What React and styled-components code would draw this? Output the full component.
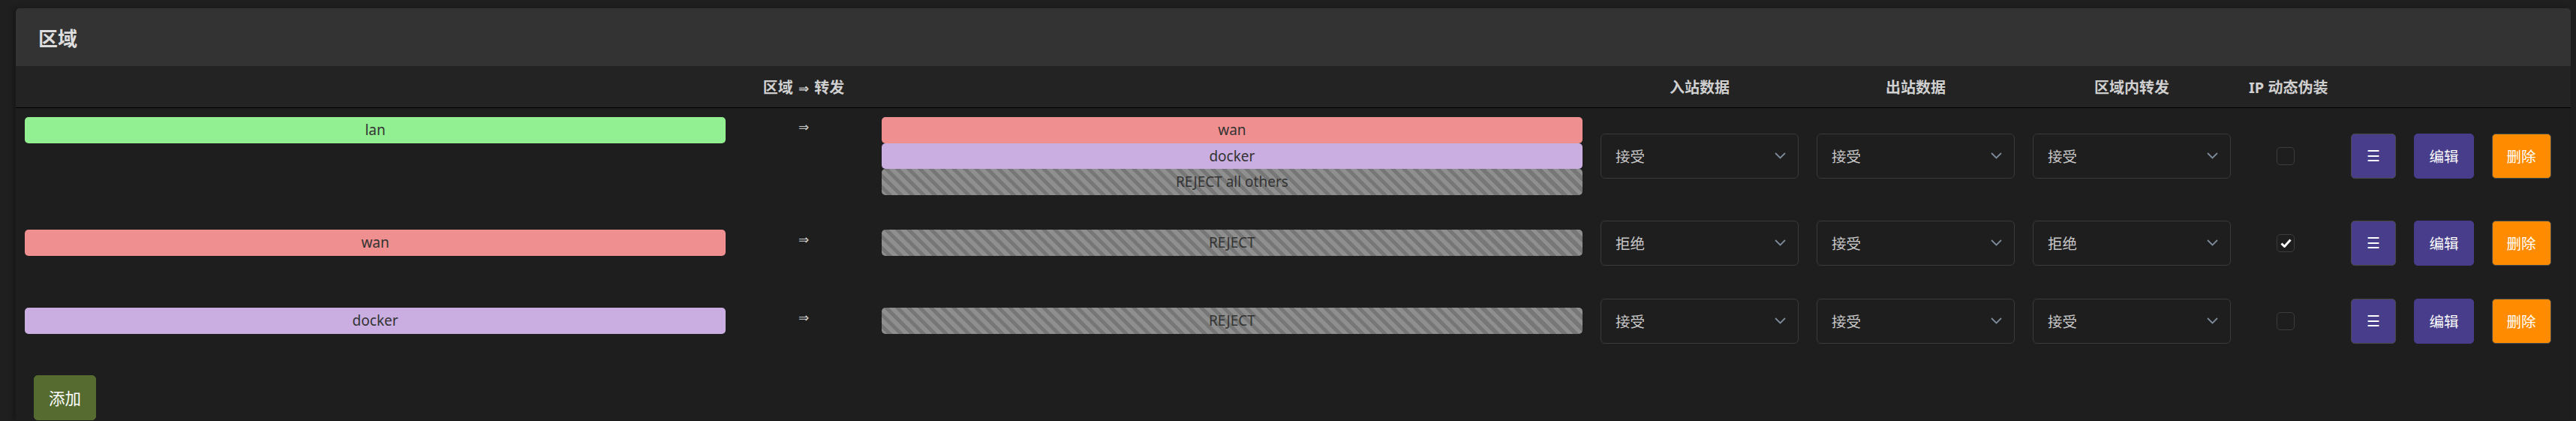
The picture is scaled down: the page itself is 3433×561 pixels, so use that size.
import React from 'react'
import styled, { createGlobalStyle } from 'styled-components'

const GlobalStyle = createGlobalStyle`
  html, body {
    margin: 0;
    background: #1f1f1f;
  }
  body {
    font-family: "Noto Sans", "Noto Sans CJK SC", sans-serif;
    color: #ccc;
  }
`

const columns = '2100px 288px 288px 288px 122px 1fr'

const Page = styled.div`
  padding: 11px 7px 0 21px;
  min-height: 561px;
  box-sizing: border-box;
`

const Card = styled.section`
  background: #1e1e1e;
  border-radius: 5px 5px 0 0;
  box-shadow: -4px 0 6px rgba(0, 0, 0, 0.25);
`

const Title = styled.h3`
  margin: 0;
  height: 77px;
  display: flex;
  align-items: center;
  padding: 0 30px;
  background: #333;
  border-radius: 5px 5px 0 0;
  font-size: 26px;
  font-weight: 700;
  color: #ddd;
`

const HeadRow = styled.div`
  display: grid;
  grid-template-columns: ${columns};
  align-items: center;
  height: 55px;
  background: #232323;
  border-bottom: 1px solid #000;
  font-size: 20px;
  font-weight: 700;
  color: #d0d0d0;
`

const HeadCell = styled.div`
  padding: 0 12px;
  text-align: center;
  white-space: nowrap;
`

const HeadArrow = styled.span`
  font-family: "DejaVu Sans", sans-serif;
  font-size: 17px;
  font-weight: 700;
  padding: 0 2px;
`

const Row = styled.div`
  display: grid;
  grid-template-columns: ${columns};
  align-items: center;
  padding: 12px 0;
`

const Cell = styled.div`
  min-height: 80px;
  padding: 0 12px;
  display: flex;
  align-items: center;
  justify-content: ${(p) => p.$justify || 'center'};
  gap: ${(p) => p.$gap || 0};
`

const Forwards = styled.div`
  flex: 1;
  display: flex;
  align-items: flex-start;
`

const Side = styled.div`
  flex: 0 0 45%;
  display: flex;
  flex-direction: column;
`

const Arrow = styled.span`
  flex: 1;
  text-align: center;
  font-family: "DejaVu Sans", sans-serif;
  font-size: 17px;
  line-height: 26px;
  color: #ccc;
`

const Badge = styled.div`
  height: ${(p) => p.$h || '35px'};
  line-height: ${(p) => p.$h || '35px'};
  border-radius: 5px;
  background: ${(p) =>
    p.$reject
      ? 'repeating-linear-gradient(45deg, #8f8f8f 0 5.3px, #777 5.3px 10.6px)'
      : p.$color};
  color: #333;
  font-size: 19px;
  text-align: center;
  white-space: nowrap;
`

const SelectBox = styled.div`
  width: 100%;
  height: 60px;
  box-sizing: border-box;
  border: 1px solid #3a3a3a;
  border-radius: 6px;
  display: flex;
  align-items: center;
  justify-content: space-between;
  padding: 0 16px 0 19px;
  font-size: 19.5px;
  color: #c8c8c8;
`

const Check = styled.span`
  width: 24px;
  height: 24px;
  box-sizing: border-box;
  border: 1px solid #3c3c3c;
  border-radius: 5px;
  display: flex;
  align-items: center;
  justify-content: center;
`

const Button = styled.button`
  height: 60px;
  padding: 0 ${(p) => p.$pad || '19px'};
  border-radius: 5px;
  border: 1px solid ${(p) => p.$border || p.$bg};
  background: ${(p) => p.$bg};
  color: #fff;
  font-family: inherit;
  font-size: ${(p) => p.$size || '19.5px'};
  cursor: pointer;
`

const Footer = styled.div`
  padding: 20px 24px 0;
`

const zoneColors = {
  lan: '#92ef92',
  wan: '#f08f8f',
  docker: '#caaee1',
}

const rows = [
  { zone: 'lan', dest: ['wan', 'docker'], rejectText: 'REJECT all others', input: '接受', output: '接受', forward: '接受', masq: false },
  { zone: 'wan', dest: [], rejectText: 'REJECT', input: '拒绝', output: '接受', forward: '拒绝', masq: true },
  { zone: 'docker', dest: [], rejectText: 'REJECT', input: '接受', output: '接受', forward: '接受', masq: false },
]

function Chevron() {
  return (
    <svg width="15" height="9" viewBox="0 0 15 9">
      <polyline points="1,1 7.5,7.5 14,1" fill="none" stroke="#7d8a99" strokeWidth="1.8" />
    </svg>
  )
}

function Select({ value }) {
  return (
    <SelectBox>
      <span>{value}</span>
      <Chevron />
    </SelectBox>
  )
}

function Checkbox({ checked }) {
  return (
    <Check>
      {checked && (
        <svg width="15" height="12" viewBox="0 0 15 12">
          <path d="M1.5 6.5 L5.5 10.5 L13.5 1.5" fill="none" stroke="#fff" strokeWidth="3" strokeLinejoin="round" />
        </svg>
      )}
    </Check>
  )
}

function ZoneRow({ row }) {
  const h = row.dest.length ? '34.5px' : '35px'
  return (
    <Row>
      <Cell>
        <Forwards>
          <Side>
            <Badge $color={zoneColors[row.zone]}>{row.zone}</Badge>
          </Side>
          <Arrow>⇒</Arrow>
          <Side>
            {row.dest.map((d) => (
              <Badge key={d} $h={h} $color={zoneColors[d]}>
                {d}
              </Badge>
            ))}
            <Badge $h={h} $reject>
              {row.rejectText}
            </Badge>
          </Side>
        </Forwards>
      </Cell>
      <Cell>
        <Select value={row.input} />
      </Cell>
      <Cell>
        <Select value={row.output} />
      </Cell>
      <Cell>
        <Select value={row.forward} />
      </Cell>
      <Cell>
        <Checkbox checked={row.masq} />
      </Cell>
      <Cell $gap="24px">
        <Button $bg="#483d8b" $border="#4a4a4a" $pad="20px">☰</Button>
        <Button $bg="#483d8b">编辑</Button>
        <Button $bg="#ff8c00" $border="#4a4a4a">删除</Button>
      </Cell>
    </Row>
  )
}

export default function App() {
  return (
    <>
      <GlobalStyle />
      <Page>
        <Card>
          <Title>区域</Title>
          <HeadRow>
            <HeadCell>
              区域 <HeadArrow>⇒</HeadArrow> 转发
            </HeadCell>
            <HeadCell>入站数据</HeadCell>
            <HeadCell>出站数据</HeadCell>
            <HeadCell>区域内转发</HeadCell>
            <HeadCell>IP 动态伪装</HeadCell>
            <HeadCell />
          </HeadRow>
          {rows.map((r) => (
            <ZoneRow key={r.zone} row={r} />
          ))}
          <Footer>
            <Button $bg="#556b2f" $size="21.5px">添加</Button>
          </Footer>
        </Card>
      </Page>
    </>
  )
}
